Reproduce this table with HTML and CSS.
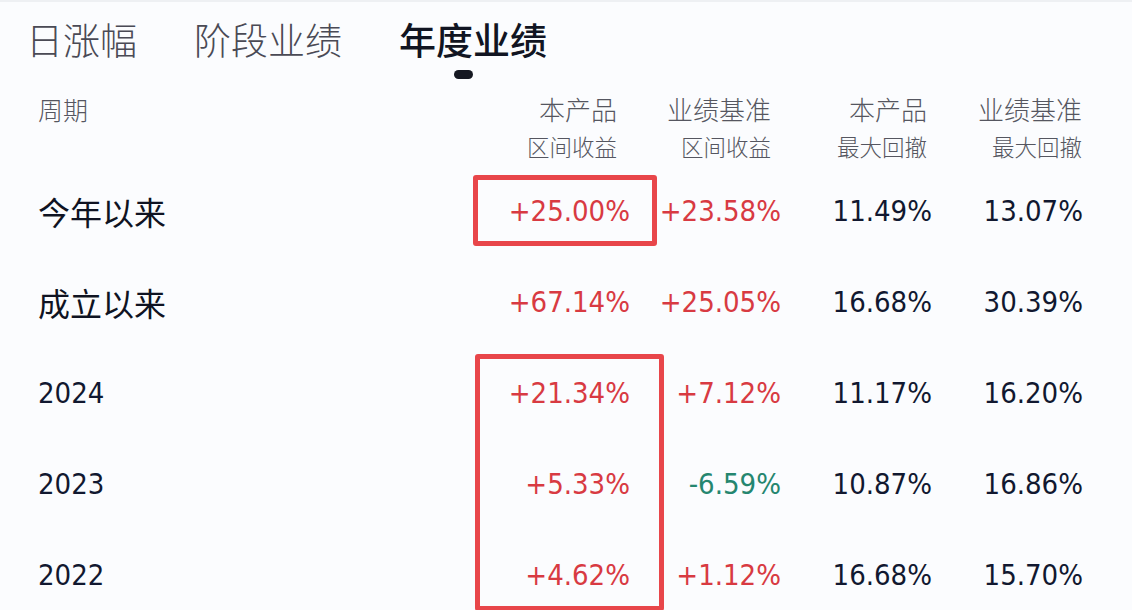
FILE: index.html
```html
<!DOCTYPE html>
<html lang="zh-CN">
<head>
<meta charset="utf-8">
<title>年度业绩</title>
<link rel="stylesheet" href="styles.css">
</head>
<body>
<div class="page">
  <nav class="tabs">
    <span class="tab">日涨幅</span>
    <span class="tab">阶段业绩</span>
    <span class="tab active">年度业绩</span>
  </nav>
  <div class="table">
    <div class="head label">周期</div>
    <div class="head c1"><span class="h1">本产品</span><span class="h2">区间收益</span></div>
    <div class="head c2"><span class="h1">业绩基准</span><span class="h2">区间收益</span></div>
    <div class="head c3"><span class="h1">本产品</span><span class="h2">最大回撤</span></div>
    <div class="head c4"><span class="h1">业绩基准</span><span class="h2">最大回撤</span></div>

    <div class="cell label cn">今年以来</div>
    <div class="cell num up">+25.00%</div>
    <div class="cell num up">+23.58%</div>
    <div class="cell num">11.49%</div>
    <div class="cell num">13.07%</div>

    <div class="cell label cn">成立以来</div>
    <div class="cell num up">+67.14%</div>
    <div class="cell num up">+25.05%</div>
    <div class="cell num">16.68%</div>
    <div class="cell num">30.39%</div>

    <div class="cell label yr">2024</div>
    <div class="cell num up">+21.34%</div>
    <div class="cell num up">+7.12%</div>
    <div class="cell num">11.17%</div>
    <div class="cell num">16.20%</div>

    <div class="cell label yr">2023</div>
    <div class="cell num up">+5.33%</div>
    <div class="cell num down">-6.59%</div>
    <div class="cell num">10.87%</div>
    <div class="cell num">16.86%</div>

    <div class="cell label yr">2022</div>
    <div class="cell num up">+4.62%</div>
    <div class="cell num up">+1.12%</div>
    <div class="cell num">16.68%</div>
    <div class="cell num">15.70%</div>
  </div>
  <div class="mark mark-a"></div>
  <div class="mark mark-b"></div>
</div>
</body>
</html>
```

FILE: styles.css
```css
* { box-sizing: border-box; }
html, body {
  margin: 0;
  padding: 0;
  background: #fbfcfe;
}
body {
  width: 1132px;
  height: 610px;
  overflow: hidden;
  font-family: "Noto Sans CJK SC", "Noto Sans", sans-serif;
  color: #151a2c;
}
.page {
  position: relative;
  width: 1132px;
  height: 610px;
  border-top: 2px solid #eef0f3;
}
.tabs {
  display: flex;
  gap: 57px;
  padding-left: 26px;
  height: 78px;
  align-items: flex-start;
}
.tab {
  position: relative;
  font-size: 37px;
  line-height: 40px;
  margin-top: 17px;
  color: #4a4a55;
  font-weight: 300;
}
.tab.active {
  color: #111522;
  font-weight: 500;
}
.tab.active::after {
  content: "";
  position: absolute;
  left: 55px;
  top: 51px;
  width: 19px;
  height: 9px;
  border-radius: 5px;
  background: #151822;
}
.table {
  display: grid;
  grid-template-columns: 441px repeat(4, 151px);
  grid-template-rows: 85px repeat(5, 91px);
  padding-left: 38px;
}
.head {
  display: flex;
  flex-direction: column;
  align-items: flex-end;
  color: #555660;
  font-weight: 300;
}
.head.label {
  align-items: flex-start;
  font-size: 25px;
  line-height: 30px;
  padding-top: 14px;
}
.h1 {
  font-size: 26px;
  line-height: 30px;
  margin-top: 14px;
}
.h2 {
  font-size: 22.5px;
  line-height: 26px;
  margin-top: 9px;
}
.head.c1 { padding-right: 13px; }
.head.c2 { padding-right: 10px; }
.head.c3 { padding-right: 5px; }
.head.c4 { padding-right: 1px; }
.cell {
  display: flex;
  align-items: center;
}
.label.cn {
  font-size: 32px;
  font-weight: 400;
  color: #0f1322;
}
.label.yr, .num {
  font-family: "DejaVu Sans", "Liberation Sans", sans-serif;
  font-stretch: condensed;
  font-size: 29px;
  color: #111830;
}
.num {
  justify-content: flex-end;
}
.num.up { color: #d83a42; }
.num.down { color: #25866f; }
.mark {
  position: absolute;
  border: 5px solid #e8464a;
  border-radius: 3px;
}
.mark-a {
  left: 473px;
  top: 173px;
  width: 184px;
  height: 71px;
}
.mark-b {
  left: 475px;
  top: 352px;
  width: 189px;
  height: 257px;
}
```
